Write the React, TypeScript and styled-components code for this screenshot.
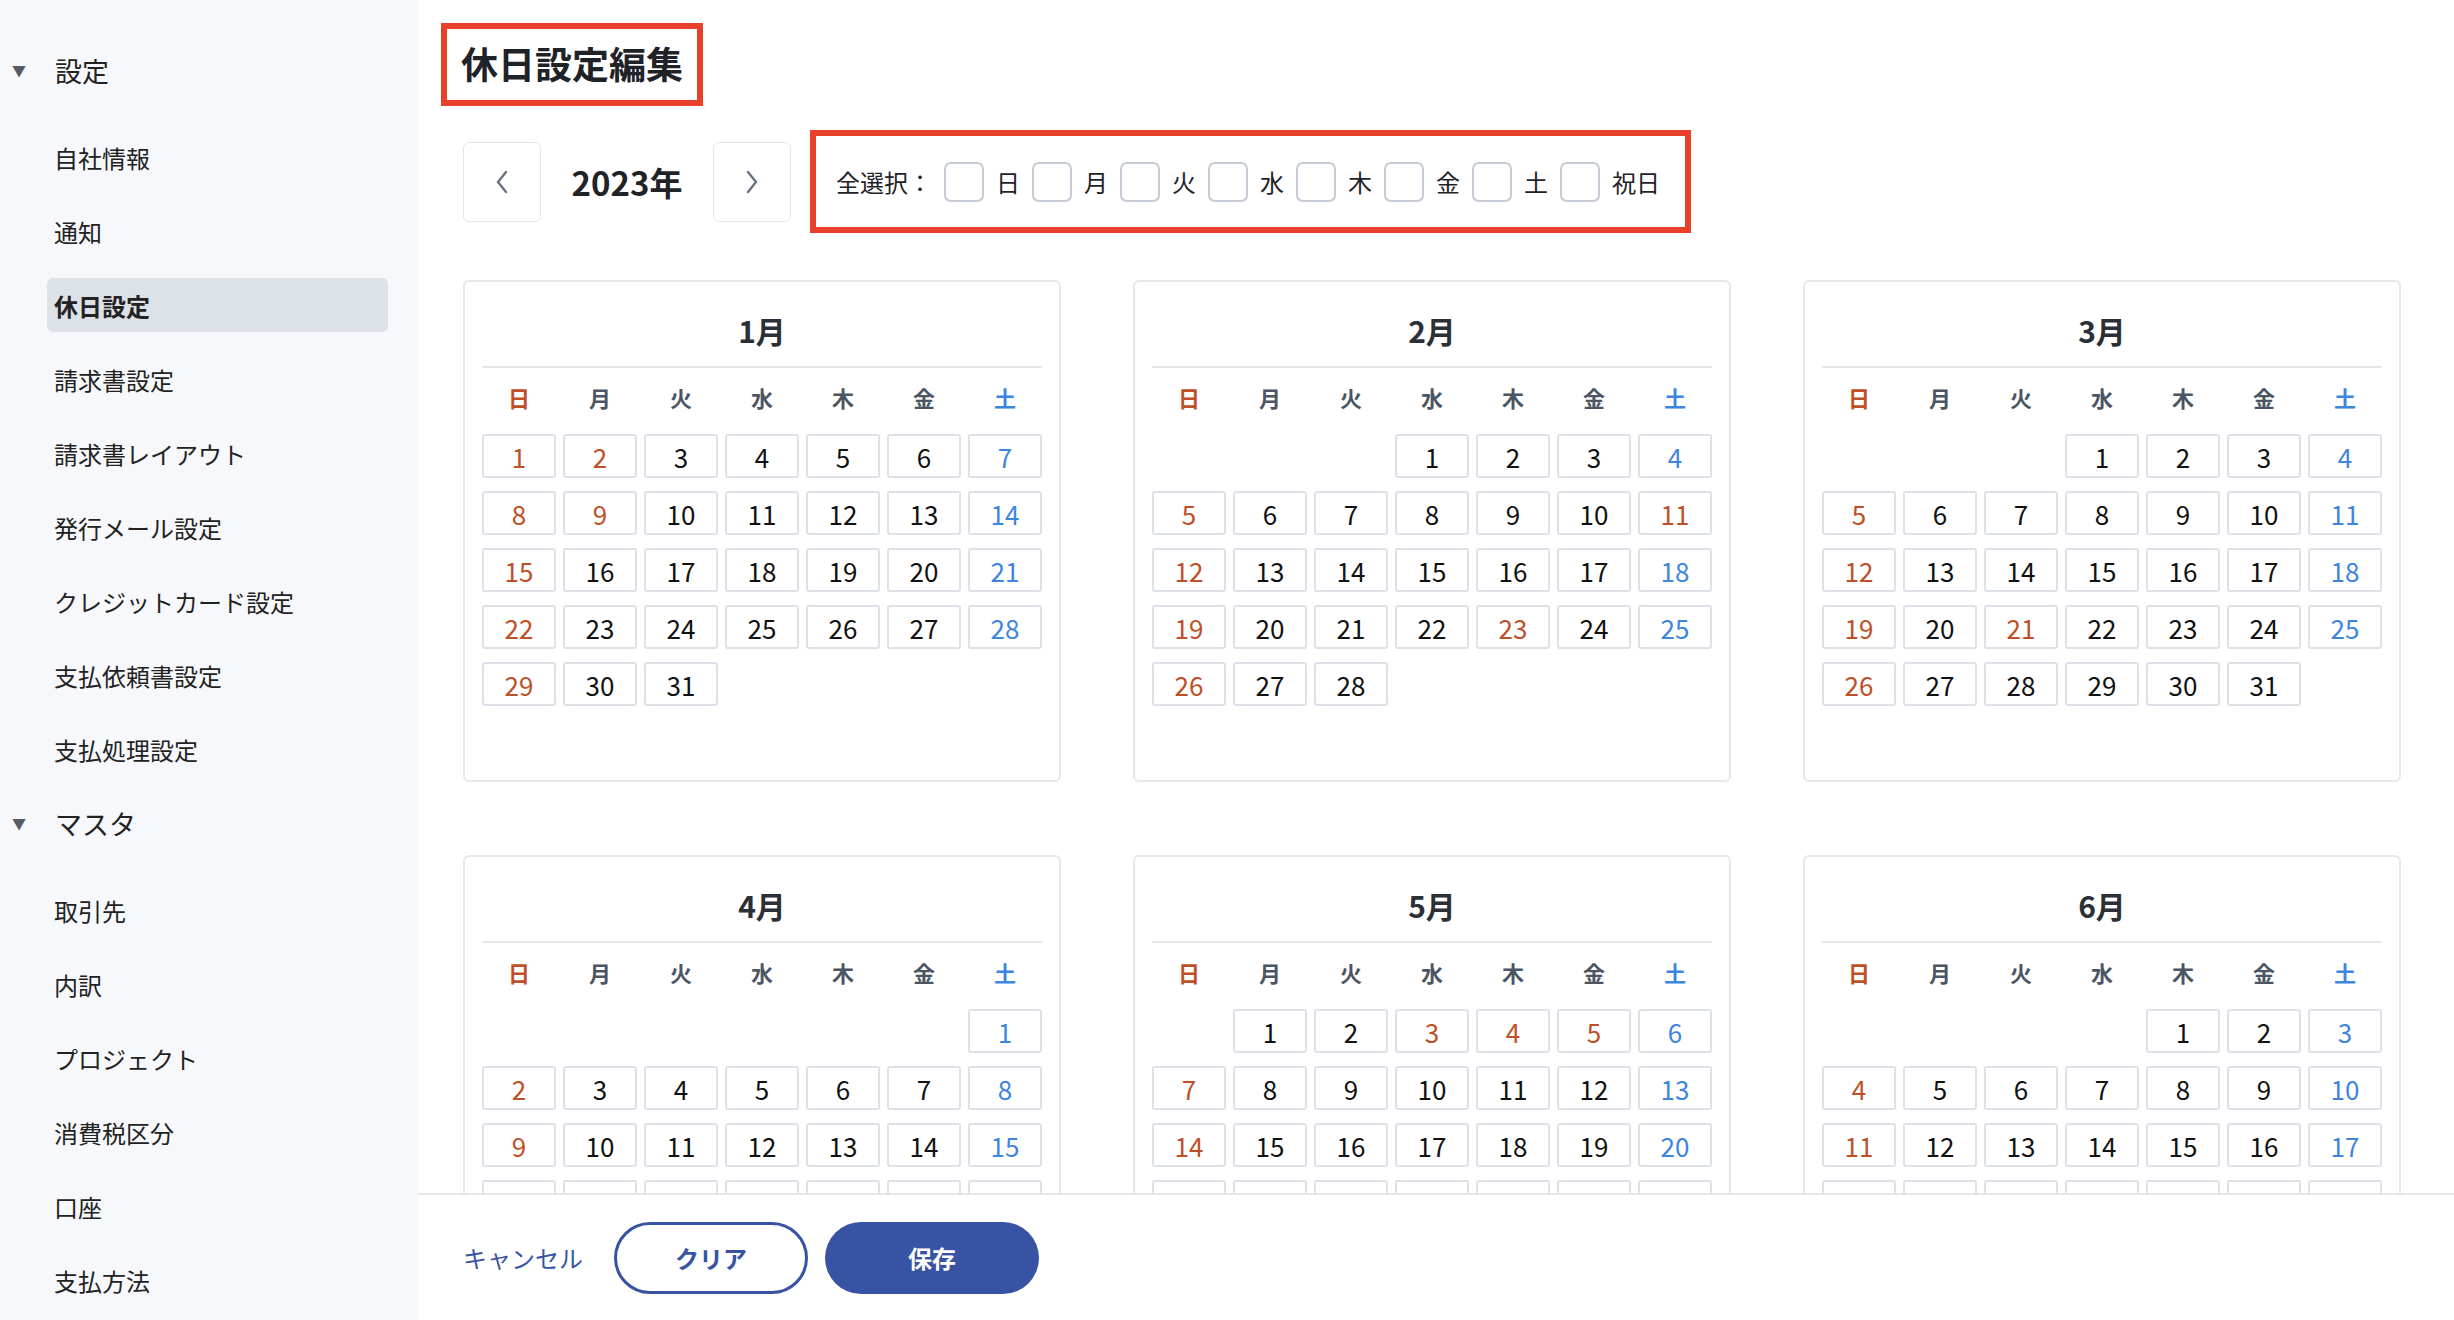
import React from 'react';
import styled, {createGlobalStyle} from "styled-components";

const GlobalStyle = createGlobalStyle`
  body {
    margin: 0;
    font-family: "Noto Sans CJK JP", "Noto Sans", sans-serif;
    color: #1f2328;
    background: #fff;
  }
`;

const YEAR = 2023;
const HOLIDAYS: Record<number, number[]> = {
  1: [1, 2, 9], 2: [11, 23], 3: [21], 4: [29], 5: [3, 4, 5], 6: [],
};
const WEEKDAYS = ["日", "月", "火", "水", "木", "金", "土"];

const settingItems = ["自社情報", "通知", "休日設定", "請求書設定", "請求書レイアウト", "発行メール設定", "クレジットカード設定", "支払依頼書設定", "支払処理設定"];
const masterItems = ["取引先", "内訳", "プロジェクト", "消費税区分", "口座", "支払方法"];

type Tone = "sun" | "sat" | "normal";

const toneColor = (t: Tone) => (t === "sun" ? "#bf4f27" : t === "sat" ? "#3d85de" : "#111");

const MonthCard = ({month}: { month: number }) => {
  const first = new Date(YEAR, month - 1, 1).getDay();
  const days = new Date(YEAR, month, 0).getDate();
  const cells: React.ReactNode[] = [];
  for (let i = 0; i < first; i++) cells.push(<span key={"e" + i} />);
  for (let d = 1; d <= days; d++) {
    const wd = (first + d - 1) % 7;
    const tone: Tone = wd === 0 || HOLIDAYS[month].includes(d) ? "sun" : wd === 6 ? "sat" : "normal";
    cells.push(<DayCell key={d} tone={tone}>{d}</DayCell>);
  }
  return (
    <Card>
      <MonthTitle>{month}月</MonthTitle>
      <WeekRow>
        {WEEKDAYS.map((w, i) => (
          <WeekLabel key={w} tone={i === 0 ? "sun" : i === 6 ? "sat" : "normal"}>{w}</WeekLabel>
        ))}
      </WeekRow>
      <DayGrid>{cells}</DayGrid>
    </Card>
  );
};

const App = () => {
  return (
    <>
      <GlobalStyle />
      <Layout>
        <Sidebar>
          <SectionHeader><Caret>▼</Caret>設定</SectionHeader>
          {settingItems.map((s) => (
            <NavItem key={s} active={s === "休日設定"}>{s}</NavItem>
          ))}
          <SectionHeader><Caret>▼</Caret>マスタ</SectionHeader>
          {masterItems.map((s) => (
            <NavItem key={s} active={false}>{s}</NavItem>
          ))}
        </Sidebar>
        <Main>
          <Content>
            <TitleBox>休日設定編集</TitleBox>
            <Toolbar>
              <NavButton>
                <svg width="16" height="26" viewBox="0 0 16 26"><path d="M12 3 L4 13 L12 23" fill="none" stroke="#6b7380" strokeWidth="2.4" strokeLinecap="round" /></svg>
              </NavButton>
              <YearText>2023年</YearText>
              <NavButton>
                <svg width="16" height="26" viewBox="0 0 16 26"><path d="M4 3 L12 13 L4 23" fill="none" stroke="#6b7380" strokeWidth="2.4" strokeLinecap="round" /></svg>
              </NavButton>
              <SelectBox>
                <span>全選択：</span>
                {[...WEEKDAYS, "祝日"].map((w) => (
                  <CheckLabel key={w}><CheckBox />{w}</CheckLabel>
                ))}
              </SelectBox>
            </Toolbar>
            <CalendarGrid>
              {[1, 2, 3, 4, 5, 6].map((m) => <MonthCard key={m} month={m} />)}
            </CalendarGrid>
          </Content>
          <Footer>
            <TextButton>キャンセル</TextButton>
            <OutlineButton>クリア</OutlineButton>
            <PrimaryButton>保存</PrimaryButton>
          </Footer>
        </Main>
      </Layout>
    </>
  );
};

const Layout = styled.div`
  display: grid;
  grid-template-columns: 418px 1fr;
  grid-template-rows: 1320px;
  height: 1320px;
  overflow: hidden;
`;

const Sidebar = styled.nav`
  background: #f6f8fb;
  padding: 33px 30px 0 0;
  display: flex;
  flex-direction: column;
  min-height: 0;
  overflow: hidden;
`;

const SectionHeader = styled.div`
  height: 74px;
  flex-shrink: 0;
  display: flex;
  align-items: center;
  font-size: 27px;
  color: #222;
  margin-bottom: 13px;
`;

const Caret = styled.span`
  width: 55px;
  padding-left: 12px;
  box-sizing: border-box;
  font-size: 14px;
  color: #555c66;
`;

const NavItem = styled.div<{ active: boolean }>`
  height: 54px;
  flex-shrink: 0;
  margin: 10px 0 10px 47px;
  padding-left: 7px;
  display: flex;
  align-items: center;
  font-size: 24px;
  font-weight: ${({active}) => (active ? 700 : 400)};
  color: #222;
  border-radius: 6px;
  background: ${({active}) => (active ? "#dde1e8" : "transparent")};
`;

const Main = styled.main`
  display: flex;
  flex-direction: column;
  min-width: 0;
  min-height: 0;
  height: 1320px;
`;

const Content = styled.div`
  flex: 1;
  min-height: 0;
  overflow: hidden;
  padding: 23px 53px 0 45px;
`;

const TitleBox = styled.h1`
  display: inline-block;
  margin: 0 0 0 -22px;
  border: 6px solid #e8402a;
  padding: 10px 14px 12px 14px;
  font-size: 37px;
  font-weight: 700;
  line-height: 49px;
`;

const Toolbar = styled.div`
  display: flex;
  align-items: center;
  margin-top: 24px;
`;

const NavButton = styled.button`
  width: 78px;
  height: 80px;
  background: #fff;
  border: 1px solid #e3e6eb;
  border-radius: 6px;
  display: flex;
  align-items: center;
  justify-content: center;
`;

const YearText = styled.div`
  font-size: 33px;
  font-weight: 700;
  width: 172px;
  text-align: center;
`;

const SelectBox = styled.div`
  margin-left: 19px;
  height: 103px;
  width: 881px;
  box-sizing: border-box;
  border: 6px solid #e8402a;
  display: flex;
  align-items: center;
  padding-left: 20px;
  font-size: 24px;
  gap: 12px;
  white-space: nowrap;
`;

const CheckLabel = styled.label`
  display: flex;
  align-items: center;
  gap: 12px;
  white-space: nowrap;
`;

const CheckBox = styled.span`
  width: 40px;
  height: 40px;
  flex-shrink: 0;
  box-sizing: border-box;
  border: 2px solid #c5ccd6;
  border-radius: 7px;
  background: #fff;
`;

const CalendarGrid = styled.div`
  display: grid;
  grid-template-columns: repeat(3, 598px);
  column-gap: 72px;
  row-gap: 73px;
  margin-top: 47px;
`;

const Card = styled.section`
  height: 502px;
  box-sizing: border-box;
  border: 2px solid #e6e8ec;
  border-radius: 6px;
  padding: 0 17px;
`;

const MonthTitle = styled.h2`
  margin: 0;
  padding-top: 28px;
  height: 56px;
  line-height: 40px;
  text-align: center;
  font-size: 30px;
  font-weight: 700;
  color: #2b2f36;
  border-bottom: 2px solid #e3e6eb;
`;

const WeekRow = styled.div`
  display: grid;
  grid-template-columns: repeat(7, 74px);
  column-gap: 7px;
  margin: 14px 0 22px;
`;

const WeekLabel = styled.div<{ tone: Tone }>`
  text-align: center;
  font-size: 22px;
  font-weight: 700;
  line-height: 30px;
  color: ${({tone}) => (tone === "normal" ? "#4b5563" : toneColor(tone))};
`;

const DayGrid = styled.div`
  display: grid;
  grid-template-columns: repeat(7, 74px);
  grid-auto-rows: 44px;
  column-gap: 7px;
  row-gap: 13px;
`;

const DayCell = styled.div<{ tone: Tone }>`
  box-sizing: border-box;
  border: 2px solid #dde1e8;
  border-radius: 3px;
  display: flex;
  align-items: center;
  justify-content: center;
  font-size: 26px;
  color: ${({tone}) => toneColor(tone)};
`;

const Footer = styled.footer`
  height: 127px;
  flex-shrink: 0;
  box-sizing: border-box;
  border-top: 2px solid #e3e6eb;
  display: flex;
  align-items: center;
  padding-left: 45px;
  gap: 17px;
  background: #fff;
`;

const TextButton = styled.button`
  background: none;
  border: none;
  color: #3953a4;
  font-family: inherit;
  font-size: 24px;
  padding: 0 14px 0 0;
`;

const OutlineButton = styled.button`
  width: 194px;
  height: 72px;
  border: 3px solid #3953a4;
  border-radius: 36px;
  background: #fff;
  color: #3953a4;
  font-family: inherit;
  font-size: 24px;
  font-weight: 700;
`;

const PrimaryButton = styled.button`
  width: 214px;
  height: 72px;
  border: none;
  border-radius: 36px;
  background: #3953a4;
  color: #fff;
  font-family: inherit;
  font-size: 24px;
  font-weight: 700;
`;

export default App;
